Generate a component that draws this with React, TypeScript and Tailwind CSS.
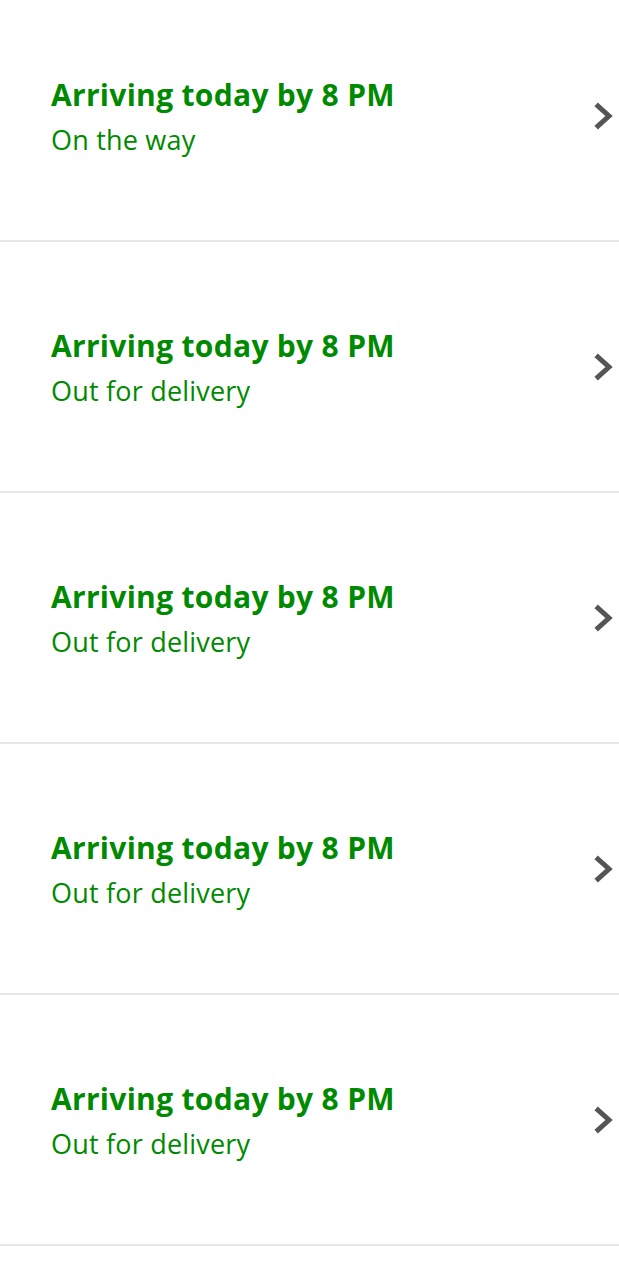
import React from 'react';

const rows = [
  { title: 'Arriving today by 8 PM', status: 'On the way' },
  { title: 'Arriving today by 8 PM', status: 'Out for delivery' },
  { title: 'Arriving today by 8 PM', status: 'Out for delivery' },
  { title: 'Arriving today by 8 PM', status: 'Out for delivery' },
  { title: 'Arriving today by 8 PM', status: 'Out for delivery' },
];

const Chevron = () => (
  <svg width="20" height="30" viewBox="0 0 20 30" fill="none">
    <polyline
      points="4,5 15,15 4,25"
      stroke="#555555"
      strokeWidth="5"
      strokeLinecap="square"
      strokeLinejoin="miter"
    />
  </svg>
);

const App = () => {
  return (
    <div className="w-[619px] h-[1279px] overflow-hidden bg-white font-['Open_Sans',sans-serif]">
      <div className="-mt-[9px]">
        {rows.map((row, i) => (
          <div
            key={i}
            className="h-[251px] flex items-center justify-between pl-[51px] pr-[5px] border-b-2 border-[#e7e7e7]"
          >
            <div className="flex flex-col text-[#008a00] pt-[2px]">
              <div className="text-[30px] font-bold leading-[40px] tracking-[0.3px]">{row.title}</div>
              <div className="text-[27px] leading-[36px] tracking-[0.2px] mt-[7px]">{row.status}</div>
            </div>
            <Chevron />
          </div>
        ))}
      </div>
    </div>
  );
};

export default App;
